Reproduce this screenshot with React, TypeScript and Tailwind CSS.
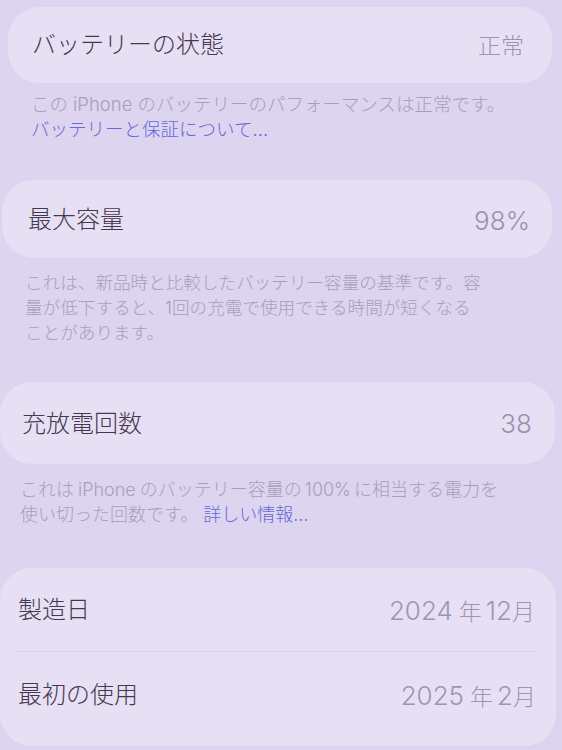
const font = "font-['Inter','Noto_Sans_CJK_JP',sans-serif]";

function Card({
  title,
  value,
  className,
  rowClass,
}: {
  title: string;
  value: React.ReactNode;
  className: string;
  rowClass: string;
}) {
  return (
    <div className={`rounded-[32px] bg-[#e7e0f4] ${className}`}>
      <div className={`flex items-center justify-between ${rowClass}`}>
        <span className="text-[24px] font-light text-[#44384f]">{title}</span>
        <span className="text-[26px] font-light text-[#9c91ae]">{value}</span>
      </div>
    </div>
  );
}

function DateValue({ year, month }: { year: string; month: string }) {
  return (
    <span className="flex items-baseline text-[26px] font-light text-[#a094b2]">
      {year}
      <span className="ml-[6px] mr-[4px] text-[23px]">年</span>
      {month}
      <span className="text-[23px]">月</span>
    </span>
  );
}

export default function App() {
  return (
    <div className={`w-[562px] h-[750px] overflow-hidden bg-[#ddd4ef] pt-[7px] ${font}`}>
      <Card
        title="バッテリーの状態"
        value={<span className="text-[23px]">正常</span>}
        className="ml-[8px] mr-[10px]"
        rowClass="h-[76px] pl-[24px] pr-[28px] pb-[1px]"
      />
      <p className="pl-[31px] pt-[9px] text-[18.5px] font-light leading-[25px] text-[#a99ebd] whitespace-nowrap">
        この<span className="mx-[5px]">iPhone</span>のバッテリーのパフォーマンスは正常です。
        <br />
        <span className="text-[#6569d6]">バッテリーと保証について...</span>
      </p>

      <Card
        title="最大容量"
        value="98%"
        className="ml-[2px] mr-[10px] mt-[38px]"
        rowClass="h-[78px] pl-[26px] pr-[22px] pt-[2px]"
      />
      <p className="pl-[25px] pt-[12px] text-[17.6px] font-light leading-[25px] text-[#a99ebd] whitespace-nowrap">
        これは、新品時と比較したバッテリー容量の基準です。容
        <br />
        量が低下すると、1回の充電で使用できる時間が短くなる
        <br />
        ことがあります。
      </p>

      <Card
        title="充放電回数"
        value="38"
        className="mr-[7px] mt-[37px]"
        rowClass="h-[82px] pl-[22px] pr-[23px] pt-[1px]"
      />
      <p className="pl-[20px] pt-[13px] text-[18px] font-light leading-[25px] text-[#a99ebd] whitespace-nowrap">
        これは<span className="mx-[4px]">iPhone</span>のバッテリー容量の
        <span className="mx-[3px]">100%</span>に相当する電力を
        <br />
        使い切った回数です。 <span className="text-[#6569d6]">詳しい情報...</span>
      </p>

      <div className="mr-[6px] mt-[41px] rounded-[32px] bg-[#e7e0f4]">
        <div className="flex h-[83px] items-center justify-between pl-[18px] pr-[21px] pt-[1px]">
          <span className="text-[24px] font-light text-[#44384f]">製造日</span>
          <DateValue year="2024" month="12" />
        </div>
        <div className="ml-[15px] mr-[18px] h-px bg-[#d9d0ea]" />
        <div className="flex h-[94px] items-center justify-between pl-[18px] pr-[20px] pb-[8px]">
          <span className="text-[24px] font-light text-[#44384f]">最初の使用</span>
          <DateValue year="2025" month="2" />
        </div>
      </div>
    </div>
  );
}
